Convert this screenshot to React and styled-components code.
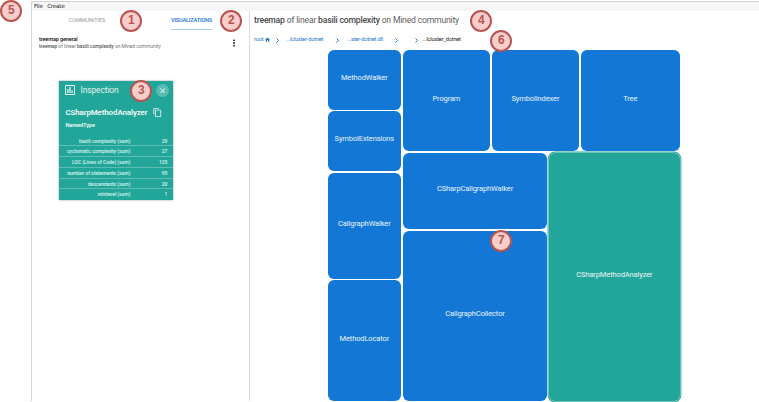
import React from "react";
import styled, { createGlobalStyle } from "styled-components";

const Global = createGlobalStyle`
  * { box-sizing: border-box; }
  html, body { margin: 0; padding: 0; background: #fff; overflow: hidden; }
  body { font-family: Roboto, "Liberation Sans", sans-serif; color: #222; }
`;

const Page = styled.div`
  position: relative;
  width: 759px;
  height: 402px;
  padding: 1px 0 0 31px;
  overflow: hidden;
`;
const Window = styled.div`
  height: 400px;
  display: flex;
  flex-direction: column;
  border-top: 1px solid #d2d2d2;
  border-left: 1px solid #d6d6d6;
`;
const MenuBar = styled.nav`
  flex: none;
  height: 9px;
  padding-left: 2px;
  display: flex;
  gap: 4.5px;
  background: #f6f6f6;
  font: 5.6px/9px "DejaVu Sans", sans-serif;
  letter-spacing: -0.18px;
  color: #222;
`;
const Columns = styled.div`
  flex: 1;
  min-height: 0;
  display: flex;
`;
const Sidebar = styled.aside`
  width: 218px;
  border-right: 1px solid #dcdcdc;
`;
const Tabs = styled.div`
  display: grid;
  grid-template-columns: 110px 99px;
  justify-items: center;
`;
const Tab = styled.div`
  height: 19px;
  padding-top: 5px;
  font-size: 5.6px;
  line-height: 9px;
  font-weight: ${(p) => (p.$active ? 500 : 400)};
  letter-spacing: ${(p) => (p.$active ? "-0.18px" : "-0.1px")};
  color: ${(p) => (p.$active ? "#1976d2" : "#999")};
  border-bottom: 1px solid ${(p) => (p.$active ? "#a5ccf2" : "transparent")};
`;
const ViewRow = styled.div`
  display: flex;
  justify-content: space-between;
  padding: 6px 13px 0 7px;
`;
const ViewName = styled.div`
  font-size: 5.6px;
  line-height: 7px;
  font-weight: 500;
  letter-spacing: -0.15px;
  color: #111;
`;
const ViewInfo = styled.div`
  font-size: 5px;
  line-height: 7px;
  letter-spacing: -0.06px;
  color: #777;
  b { font-weight: 500; color: #555; }
`;
const Dots = styled.svg`
  width: 4px;
  height: 8px;
  margin-top: 3px;
  fill: #111;
`;
const Card = styled.section`
  width: 113.5px;
  height: 119.5px;
  margin: 30.8px 0 0 27.4px;
  background: #22a699;
  color: #fff;
  box-shadow: 0 0 2px rgba(0, 0, 0, 0.4);
`;
const CardHead = styled.header`
  height: 19px;
  display: flex;
  align-items: center;
  padding: 0 4px 0 5.6px;
`;
const CardTitle = styled.div`
  flex: 1;
  margin-left: 5.5px;
  font-size: 8.4px;
  letter-spacing: -0.08px;
  color: #e1f5f2;
`;
const Icon = styled.svg`
  flex: none;
  width: ${(p) => p.$size}px;
  height: ${(p) => p.$size}px;
  fill: #e8f8f6;
`;
const Close = styled.span`
  width: 13px;
  height: 13px;
  display: flex;
  align-items: center;
  justify-content: center;
  border-radius: 50%;
  background: #58bcb2;
`;
const ClassLine = styled.div`
  height: 20px;
  padding: 6px 6px 0 6px;
  display: flex;
  align-items: center;
  gap: 5.5px;
  font-size: 7.9px;
  font-weight: 500;
  letter-spacing: -0.07px;
  white-space: nowrap;
`;
const Kind = styled.div`
  height: 16px;
  padding-left: 6px;
  font-size: 5.6px;
  line-height: 11px;
  font-weight: 500;
  letter-spacing: -0.07px;
`;
const Metrics = styled.div`
  display: grid;
  grid-auto-rows: 10.7px;
`;
const Metric = styled.div`
  display: grid;
  grid-template-columns: 71px 37px;
  text-align: right;
  font-size: 5px;
  line-height: 11px;
  font-weight: 500;
  letter-spacing: -0.03px;
  color: #dcf3ef;
  border-bottom: ${(p) => (p.$last ? 0 : "1px")} solid #5dbdb3;
`;
const Main = styled.main`
  flex: 1;
  padding-left: 4px;
`;
const Heading = styled.h1`
  margin: 0;
  padding-top: 2px;
  font-size: 8.6px;
  line-height: 14px;
  font-weight: 400;
  color: #606060;
  letter-spacing: -0.18px;
  b { font-weight: 500; color: #484848; }
`;
const Trail = styled.div`
  height: 23px;
  padding-top: 8px;
  display: grid;
  align-items: start;
  grid-template-columns: 22px 10px 50px 11px 48px 19.5px 8px auto;
  font-size: 5.6px;
  line-height: 9px;
  letter-spacing: -0.17px;
  color: #1976d2;
`;
const Crumb = styled.span`
  display: flex;
  align-items: center;
  gap: 2px;
  color: ${(p) => (p.$current ? "#222" : "inherit")};
`;
const Home = styled.svg`
  width: 5px;
  height: 5px;
  fill: #1976d2;
`;
const Arrow = styled.svg`
  width: 3px;
  height: 5px;
  margin-top: 2.5px;
  fill: none;
  stroke: #1976d2;
  stroke-width: 1;
`;
const Treemap = styled.div`
  width: 352.5px;
  height: 351px;
  margin-left: 74px;
  display: grid;
  grid-template-columns: 72.7px 277.5px;
  column-gap: 2.1px;
`;
const LeftStack = styled.div`
  display: grid;
  grid-template-rows: 59.7px 59.7px 106px 120.8px;
  row-gap: 1.6px;
`;
const RightStack = styled.div`
  display: grid;
  grid-template-rows: 101px 248.2px;
  row-gap: 1.8px;
`;
const TopRow = styled.div`
  display: grid;
  grid-template-columns: 87.2px 87.3px 98.7px;
  column-gap: 1.8px;
`;
const LowerRow = styled.div`
  display: grid;
  grid-template-columns: 144.5px 131px;
  column-gap: 1.6px;
`;
const Pair = styled.div`
  display: grid;
  grid-template-rows: 76.4px 170.2px;
  row-gap: 1.6px;
`;
const Tile = styled.div`
  display: flex;
  align-items: center;
  justify-content: center;
  padding-bottom: 5px;
  border-radius: 6px;
  background: ${(p) => (p.$selected ? "#22a699" : "#1277d5")};
  box-shadow: ${(p) => (p.$selected ? "0 0 0 0.5px #b5e0da, 0 0 0 1.4px #22a699" : "none")};
  color: #e9f4fc;
  font-size: 7.5px;
  letter-spacing: -0.12px;
  white-space: nowrap;
`;
const Badge = styled.div`
  position: absolute;
  left: ${(p) => p.$x - 10.6}px;
  top: ${(p) => p.$y - 10.6}px;
  width: 22px;
  height: 22px;
  display: flex;
  align-items: center;
  justify-content: center;
  padding-bottom: 2px;
  border: 2px solid #b85450;
  border-radius: 50%;
  background: #f8cecc;
  color: #b85450;
  font: bold 12px/12px "Liberation Sans", sans-serif;
`;

const metrics = [
  ["basili complexity (sum)", 29],
  ["cyclomatic complexity (sum)", 27],
  ["LOC (Lines of Code) (sum)", 125],
  ["number of statements (sum)", 95],
  ["descendants (sum)", 20],
  ["minlevel (sum)", 1],
];
const badges = [
  [1, 131, 21], [2, 231, 21], [3, 141, 91], [4, 481, 21],
  [5, 11, 11], [6, 501, 41], [7, 501, 241],
];

const Chevron = () => (
  <Arrow viewBox="0 0 3 5"><path d="M.5.5 2.5 2.5.5 4.5" /></Arrow>
);

export default function App() {
  return (
    <Page>
      <Global />
      <Window>
        <MenuBar><span>File</span><span>Create</span></MenuBar>
        <Columns>
          <Sidebar>
            <Tabs><Tab>COMMUNITIES</Tab><Tab $active>VISUALIZATIONS</Tab></Tabs>
            <ViewRow>
              <div>
                <ViewName>treemap general</ViewName>
                <ViewInfo><b>treemap</b> of linear <b>basili complexity</b> on Mined community</ViewInfo>
              </div>
              <Dots viewBox="0 0 4 8">
                <circle cx="2" cy="1.3" r=".9" /><circle cx="2" cy="4" r=".9" /><circle cx="2" cy="6.7" r=".9" />
              </Dots>
            </ViewRow>
            <Card>
              <CardHead>
                <Icon $size={10} viewBox="0 0 20 20">
                  <path fillRule="evenodd" d="M2 0h16a2 2 0 0 1 2 2v16a2 2 0 0 1-2 2H2a2 2 0 0 1-2-2V2a2 2 0 0 1 2-2zm0 2v16h16V2zM4.500 8H7v8H4.500zM8.800 4h2.500v12H8.800zM13 11h2.500v5H13z" />
                </Icon>
                <CardTitle>Inspection</CardTitle>
                <Close>
                  <Icon $size={5.6} viewBox="0 0 14 14">
                    <path d="M14 1.400 12.600 0 7 5.600 1.400 0 0 1.400 5.600 7 0 12.600 1.400 14 7 8.400 12.600 14 14 12.600 8.400 7z" />
                  </Icon>
                </Close>
              </CardHead>
              <ClassLine>
                CSharpMethodAnalyzer
                <Icon $size={9} viewBox="1 1 22 22">
                  <path d="M16 1H4a2 2 0 0 0-2 2v14h2V3h12zm3 4H8a2 2 0 0 0-2 2v14a2 2 0 0 0 2 2h11a2 2 0 0 0 2-2V7a2 2 0 0 0-2-2zm0 16H8V7h11z" />
                </Icon>
              </ClassLine>
              <Kind>NamedType</Kind>
              <Metrics>
                {metrics.map(([name, value], i) => (
                  <Metric key={name} $last={i === metrics.length - 1}>
                    <span>{name}</span><span>{value}</span>
                  </Metric>
                ))}
              </Metrics>
            </Card>
          </Sidebar>
          <Main>
            <Heading><b>treemap</b> of linear <b>basili complexity</b> on Mined community</Heading>
            <Trail>
              <Crumb>
                root
                <Home viewBox="0 0 20 17"><path d="M8 17v-6h4v6h5V9h3L10 0 0 9h3v8z" /></Home>
              </Crumb>
              <Chevron />
              <Crumb>...lcluster-dotnet</Crumb>
              <Chevron />
              <Crumb>...ster-dotnet.dll</Crumb>
              <Chevron />
              <Chevron />
              <Crumb $current>...lcluster_dotnet</Crumb>
            </Trail>
            <Treemap>
              <LeftStack>
                <Tile>MethodWalker</Tile>
                <Tile>SymbolExtensions</Tile>
                <Tile>CallgraphWalker</Tile>
                <Tile>MethodLocator</Tile>
              </LeftStack>
              <RightStack>
                <TopRow>
                  <Tile>Program</Tile><Tile>SymbolIndexer</Tile><Tile>Tree</Tile>
                </TopRow>
                <LowerRow>
                  <Pair>
                    <Tile>CSharpCallgraphWalker</Tile>
                    <Tile>CallgraphCollector</Tile>
                  </Pair>
                  <Tile $selected>CSharpMethodAnalyzer</Tile>
                </LowerRow>
              </RightStack>
            </Treemap>
          </Main>
        </Columns>
      </Window>
      {badges.map(([n, x, y]) => <Badge key={n} $x={x} $y={y}>{n}</Badge>)}
    </Page>
  );
}
